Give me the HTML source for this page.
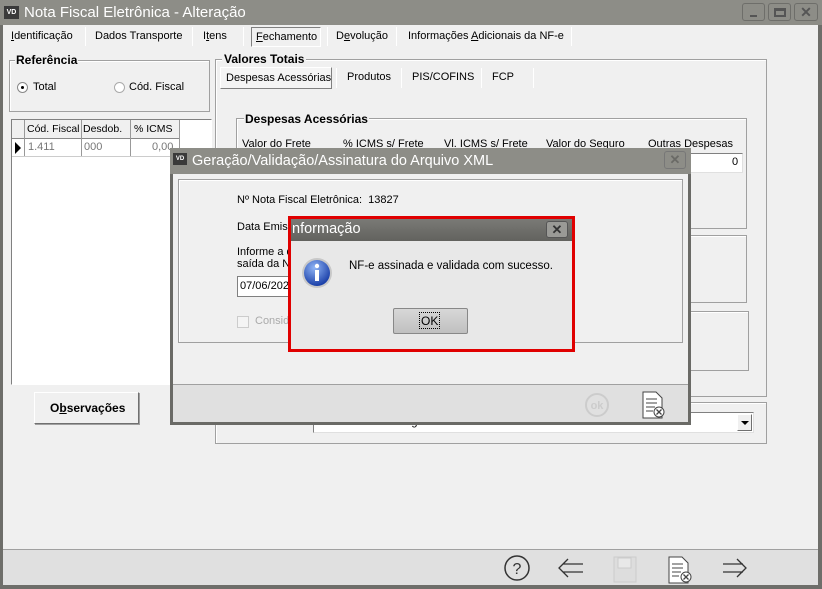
<!DOCTYPE html>
<html><head><meta charset="utf-8"><style>
*{box-sizing:border-box;margin:0;padding:0}
body{width:822px;height:589px;overflow:hidden;background:#f0f0f0;font-family:"Liberation Sans",sans-serif;font-size:11px;color:#000;position:relative}
.a{position:absolute}
.t{position:absolute;white-space:nowrap;font-size:11px}
.gb{position:absolute;border:1px solid #a0a0a0;box-shadow:1px 1px 0 #fff inset}
.sep{position:absolute;width:1px;background:#a0a0a0;border-right:1px solid #fff}
.ti{font-family:"Liberation Sans",sans-serif}
.b{font-weight:bold;font-size:12px}
</style></head><body>
<div class="a" style="left:0;top:0;width:822px;height:25px;background:#8d8d87"></div>
<div class="a" style="left:4px;top:6px;width:15px;height:13px;background:#3a3a3a;color:#fff;font-size:7px;line-height:13px;text-align:center;font-weight:bold">VD</div>
<div class="t ti" style="left:24px;top:4px;color:#fff;font-size:15px">Nota Fiscal Eletrônica - Alteração</div>
<div class="a" style="left:742px;top:3px;width:23px;height:18px;border:1px solid #6e6e6a;border-radius:3px;background:#8d8d87"><div class="a" style="left:7px;top:11px;width:7px;height:2px;background:#555"></div></div>
<div class="a" style="left:768px;top:3px;width:23px;height:18px;border:1px solid #6e6e6a;border-radius:3px;background:#8d8d87"><div class="a" style="left:5px;top:4px;width:12px;height:9px;border:2px solid #555;border-top-width:3px"></div></div>
<div class="a" style="left:794px;top:3px;width:24px;height:18px;border:1px solid #6e6e6a;border-radius:3px;background:#8d8d87;color:#555;font-weight:bold;font-size:14px;text-align:center;line-height:16px">✕</div>
<div class="a" style="left:818px;top:25px;width:4px;height:564px;background:#6e6e6a"></div>
<div class="a" style="left:0;top:25px;width:3px;height:564px;background:#6e6e6a"></div>
<div class="a" style="left:0;top:585px;width:822px;height:4px;background:#6e6e6a"></div>

<div class="t" style="left:11px;top:30px"><u>I</u>dentificação</div>
<div class="sep" style="left:85px;top:27px;height:19px"></div>
<div class="t" style="left:95px;top:30px">Dados Transporte</div>
<div class="sep" style="left:192px;top:27px;height:19px"></div>
<div class="t" style="left:203px;top:30px">I<u>t</u>ens</div>
<div class="sep" style="left:243px;top:27px;height:19px"></div>
<div class="a" style="left:251px;top:27px;width:70px;height:20px;border:1px solid;border-color:#808080 #fff #fff #808080"></div>
<div class="t" style="left:256px;top:31px"><u>F</u>echamento</div>
<div class="sep" style="left:327px;top:27px;height:19px"></div>
<div class="t" style="left:336px;top:30px">D<u>e</u>volução</div>
<div class="sep" style="left:396px;top:27px;height:19px"></div>
<div class="t" style="left:408px;top:30px">Informações <u>A</u>dicionais da NF-e</div>
<div class="sep" style="left:571px;top:27px;height:19px"></div>

<div class="gb" style="left:9px;top:60px;width:201px;height:52px"></div>
<div class="t b" style="left:15px;top:53px;background:#f0f0f0;padding:0 1px">Referência</div>
<div class="a" style="left:17px;top:82px;width:11px;height:11px;border-radius:50%;border:1px solid #888;background:#fff"><div class="a" style="left:3px;top:3px;width:3px;height:3px;border-radius:50%;background:#000"></div></div>
<div class="t" style="left:33px;top:81px">Total</div>
<div class="a" style="left:114px;top:82px;width:11px;height:11px;border-radius:50%;border:1px solid #aaa;background:#fff"></div>
<div class="t" style="left:129px;top:81px">Cód. Fiscal</div>

<div class="a" style="left:11px;top:119px;width:201px;height:266px;border:1px solid;border-color:#808080 #fff #fff #808080;background:#f0f0f0"></div>
<div class="a" style="left:12px;top:120px;width:200px;height:264px;background:#fff"></div>
<div class="a" style="left:12px;top:120px;width:168px;height:19px;background:#f0f0f0;border-bottom:1px solid #888"></div>
<div class="a" style="left:24px;top:120px;width:1px;height:36px;background:#999"></div>
<div class="a" style="left:81px;top:120px;width:1px;height:36px;background:#999"></div>
<div class="a" style="left:130px;top:120px;width:1px;height:36px;background:#999"></div>
<div class="a" style="left:179px;top:120px;width:1px;height:36px;background:#999"></div>
<div class="a" style="left:12px;top:156px;width:168px;height:1px;background:#ccc"></div>
<div class="t" style="left:27px;top:123px;font-size:10.5px">Cód. Fiscal</div>
<div class="t" style="left:83px;top:123px;font-size:10.5px">Desdob.</div>
<div class="t" style="left:134px;top:123px;font-size:10.5px">% ICMS</div>
<div class="a" style="left:15px;top:142px;width:0;height:0;border-left:6px solid #000;border-top:6px solid transparent;border-bottom:6px solid transparent"></div>
<div class="t" style="left:28px;top:141px;color:#777">1.411</div>
<div class="t" style="left:84px;top:141px;color:#777">000</div>
<div class="t" style="left:152px;top:141px;color:#777">0,00</div>

<div class="a" style="left:34px;top:392px;width:105px;height:32px;border:1px solid;border-color:#fff #707070 #707070 #fff;background:#f0f0f0;box-shadow:1px 1px 0 #a0a0a0"></div>
<div class="t b" style="left:50px;top:401px">O<u>b</u>servações</div>

<div class="gb" style="left:215px;top:59px;width:552px;height:338px"></div>
<div class="t b" style="left:222px;top:52px;background:#f0f0f0;padding:0 2px">Valores Totais</div>
<div class="a" style="left:220px;top:67px;width:112px;height:22px;border:1px solid;border-color:#fff #808080 #808080 #fff;background:#f4f4f4"></div>
<div class="t" style="left:226px;top:72px">Despesas Acessórias</div>
<div class="sep" style="left:336px;top:68px;height:20px"></div>
<div class="t" style="left:347px;top:71px">Produtos</div>
<div class="sep" style="left:401px;top:68px;height:20px"></div>
<div class="t" style="left:412px;top:71px">PIS/COFINS</div>
<div class="sep" style="left:481px;top:68px;height:20px"></div>
<div class="t" style="left:492px;top:71px">FCP</div>
<div class="sep" style="left:533px;top:68px;height:20px"></div>

<div class="gb" style="left:236px;top:118px;width:511px;height:111px"></div>
<div class="t b" style="left:244px;top:112px;background:#f0f0f0;padding:0 1px">Despesas Acessórias</div>
<div class="t" style="left:242px;top:138px">Valor do Frete</div>
<div class="t" style="left:343px;top:138px">% ICMS s/ Frete</div>
<div class="t" style="left:444px;top:138px">Vl. ICMS s/ Frete</div>
<div class="t" style="left:546px;top:138px">Valor do Seguro</div>
<div class="t" style="left:648px;top:138px">Outras Despesas</div>
<div class="a" style="left:690px;top:153px;width:53px;height:20px;background:#fff;border:1px solid;border-color:#808080 #e0e0e0 #e0e0e0 #808080"></div>
<div class="t" style="left:732px;top:156px">0</div>
<div class="gb" style="left:640px;top:235px;width:107px;height:68px"></div>
<div class="gb" style="left:640px;top:311px;width:109px;height:60px"></div>

<div class="gb" style="left:215px;top:402px;width:552px;height:42px"></div>
<div class="a" style="left:313px;top:412px;width:441px;height:21px;background:#fff;border:1px solid;border-color:#808080 #e0e0e0 #e0e0e0 #808080"></div>
<div class="a" style="left:737px;top:414px;width:15px;height:17px;background:#f0f0f0;border:1px solid;border-color:#fff #707070 #707070 #fff"><div class="a" style="left:3px;top:6px;border-left:4px solid transparent;border-right:4px solid transparent;border-top:4px solid #000"></div></div>
<div class="t" style="left:316px;top:416px">55 - Documento Regular</div>

<div class="a" style="left:3px;top:549px;width:815px;height:36px;background:#e0e0e0;border-top:1px solid #a0a0a0"></div>
<svg class="a" style="left:500px;top:552px" width="260" height="32" viewBox="0 0 260 32">
<circle cx="17" cy="16" r="12" fill="none" stroke="#333" stroke-width="1.5"/>
<text x="17" y="22" font-size="16" text-anchor="middle" font-family="Liberation Sans" fill="#333">?</text>
<path d="M83 12H63M83 20H63M68 7l-9 9 9 9" fill="none" stroke="#333" stroke-width="1.3"/>
<rect x="114" y="5" width="22" height="25" fill="#ddd" stroke="#ccc"/><rect x="118" y="6" width="13" height="10" fill="#e8e8e8" stroke="#ccc"/>
<path d="M169 5h13l6 6v20h-19z" fill="#fff" stroke="#444"/><path d="M172 12h11M172 16h11M172 20h9M172 24h7" stroke="#444"/>
<circle cx="186" cy="25" r="5" fill="#fff" stroke="#444"/><path d="M183.5 22.5l5 5M188.5 22.5l-5 5" stroke="#444" stroke-width="1.3"/>
<path d="M223 12h20M223 20h20M237 7l9 9-9 9" fill="none" stroke="#333" stroke-width="1.3"/>
</svg>

<div class="a" style="left:170px;top:148px;width:521px;height:277px;background:#f0f0f0;border:3px solid #6a6a66;border-top:none"></div>
<div class="a" style="left:170px;top:148px;width:521px;height:26px;background:#8d8d87"></div>
<div class="a" style="left:173px;top:153px;width:14px;height:12px;background:#3a3a3a;color:#fff;font-size:6px;line-height:12px;text-align:center;font-weight:bold">VD</div>
<div class="t ti" style="left:192px;top:153px;color:#fff;font-size:14.5px">Geração/Validação/Assinatura do Arquivo XML</div>
<div class="a" style="left:664px;top:151px;width:22px;height:18px;border:1px solid #777;border-radius:3px;color:#6a6a66;font-weight:bold;font-size:13px;text-align:center;line-height:16px">✕</div>
<div class="a" style="left:178px;top:179px;width:505px;height:164px;border:1px solid #a0a0a0;box-shadow:1px 1px 0 #fff inset"></div>
<div class="t" style="left:237px;top:194px">Nº Nota Fiscal Eletrônica:&nbsp; 13827</div>
<div class="t" style="left:237px;top:221px">Data Emissão</div>
<div class="t" style="left:237px;top:246px;line-height:12px">Informe a data<br>saída da NF-e</div>
<div class="a" style="left:237px;top:276px;width:70px;height:21px;background:#fff;border:1px solid #808080"></div>
<div class="t" style="left:240px;top:280px">07/06/2021</div>
<div class="a" style="left:237px;top:316px;width:12px;height:12px;border:1px solid #ccc;background:#f4f4f4"></div>
<div class="t" style="left:255px;top:315px;color:#aaa">Considerar</div>
<div class="a" style="left:173px;top:384px;width:515px;height:38px;background:#e0e0e0;border-top:1px solid #a0a0a0"></div>
<svg class="a" style="left:580px;top:388px" width="90" height="32" viewBox="0 0 90 32">
<circle cx="17" cy="17" r="11" fill="none" stroke="#ccc" stroke-width="2"/>
<text x="17" y="21" font-size="11" font-weight="bold" text-anchor="middle" fill="#ccc" font-family="Liberation Sans">ok</text>
<path d="M63 4h13l6 6v20h-19z" fill="#fff" stroke="#444"/><path d="M66 11h11M66 15h11M66 19h9M66 23h7" stroke="#444"/>
<circle cx="79" cy="24" r="5" fill="#fff" stroke="#444"/><path d="M76.5 21.5l5 5M81.5 21.5l-5 5" stroke="#444" stroke-width="1.3"/>
</svg>

<div class="a" style="left:288px;top:216px;width:287px;height:136px;border:3px solid #e00000;background:#e8e8e8"></div>
<div class="a" style="left:291px;top:219px;width:281px;height:22px;background:linear-gradient(#7a7a76,#62625e)"></div>
<div class="t ti" style="left:292px;top:221px;color:#fff;font-size:14.5px">nformação</div>
<div class="a" style="left:546px;top:221px;width:22px;height:17px;border:1px solid #555;border-radius:3px;background:#9a9a96;color:#333;font-weight:bold;font-size:13px;text-align:center;line-height:15px">✕</div>
<svg class="a" style="left:301px;top:257px" width="32" height="32" viewBox="0 0 32 32">
<defs><radialGradient id="g" cx="40%" cy="30%" r="70%"><stop offset="0" stop-color="#8fb4f5"/><stop offset="1" stop-color="#1a3fa8"/></radialGradient></defs>
<circle cx="16" cy="16" r="15" fill="#c8c8c8"/><circle cx="16" cy="16" r="13" fill="url(#g)"/>
<circle cx="16" cy="9" r="2.2" fill="#fff"/><rect x="14" y="13" width="4" height="11" fill="#fff"/>
</svg>
<div class="t" style="left:349px;top:260px;font-size:11.5px">NF-e assinada e validada com sucesso.</div>
<div class="a" style="left:393px;top:308px;width:75px;height:26px;border:1px solid #888;border-radius:2px;background:linear-gradient(#d8d8d8,#c0c0c0)"></div>
<div class="a" style="left:419px;top:312px;width:21px;height:17px;border:1px dotted #000"></div>
<div class="t" style="left:421px;top:314px;font-size:12px">OK</div>
</body></html>
